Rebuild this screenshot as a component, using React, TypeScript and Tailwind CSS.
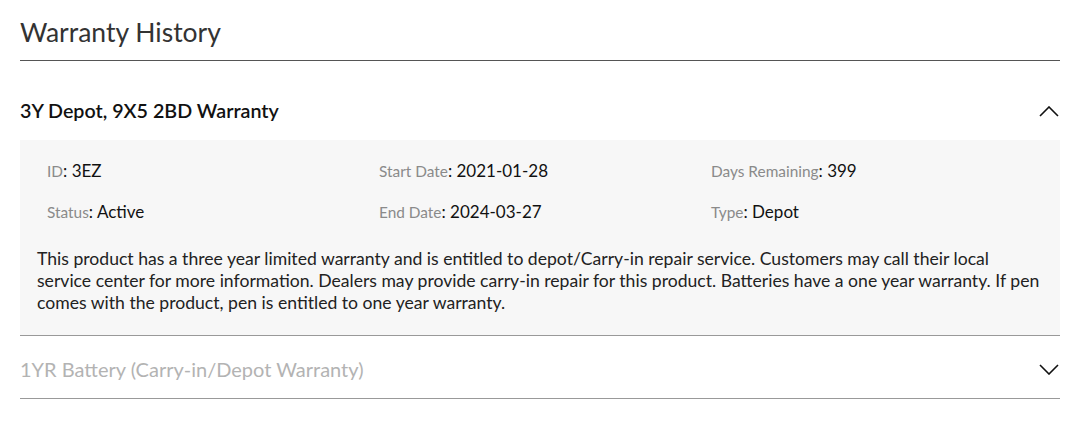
interface Field {
  label: string;
  value: string;
}

const fields: Field[] = [
  { label: 'ID', value: '3EZ' },
  { label: 'Start Date', value: '2021-01-28' },
  { label: 'Days Remaining', value: '399' },
  { label: 'Status', value: 'Active' },
  { label: 'End Date', value: '2024-03-27' },
  { label: 'Type', value: 'Depot' },
];

function Chevron({ up }: { up?: boolean }) {
  return (
    <svg width="20" height="11" viewBox="0 0 20 11" fill="none" className="mr-[1px]">
      <polyline
        points={up ? '1,10 10,1 19,10' : '1,1 10,10 19,1'}
        stroke="#111"
        strokeWidth="1.6"
      />
    </svg>
  );
}

function FieldItem({ label, value }: Field) {
  return (
    <div className="flex items-baseline leading-[24px]">
      <span className="text-[15.4px] text-[#8a8a8a]">{label}</span>
      <span className="text-[17px] text-[#111]">: {value}</span>
    </div>
  );
}

export default function App() {
  return (
    <div
      className="w-[1080px] h-[428px] bg-white px-5 pt-[14px]"
      style={{ fontFamily: 'Lato, "Open Sans", sans-serif' }}
    >
      <h1 className="text-[26.5px] leading-[36px] text-[#333] pb-[10px] border-b border-[#555]">
        Warranty History
      </h1>

      <section>
        <button className="w-full h-[79px] pt-[21px] flex items-center justify-between">
          <span className="text-[19.7px] font-semibold text-[#111]">3Y Depot, 9X5 2BD Warranty</span>
          <Chevron up />
        </button>
        <div className="bg-[#f7f7f7] pl-[17px] pr-[16px] pt-[19px] pb-[21px] border-b border-[#999]">
          <div className="grid grid-cols-[332px_332px_1fr] gap-y-[17px] pl-[10px]">
            {fields.map((f) => (
              <FieldItem key={f.label} {...f} />
            ))}
          </div>
          <p className="mt-[24px] text-[17.6px] leading-[22px] text-[#222]">
            This product has a three year limited warranty and is entitled to depot/Carry-in repair service.
            Customers may call their local service center for more information. Dealers may provide carry-in
            repair for this product. Batteries have a one year warranty. If pen comes with the product, pen is
            entitled to one year warranty.
          </p>
        </div>
      </section>

      <section>
        <button className="w-full h-[63px] pt-[4px] flex items-center justify-between border-b border-[#999]">
          <span className="text-[20px] text-[#b3b3b3]">1YR Battery (Carry-in/Depot Warranty)</span>
          <Chevron />
        </button>
      </section>
    </div>
  );
}
